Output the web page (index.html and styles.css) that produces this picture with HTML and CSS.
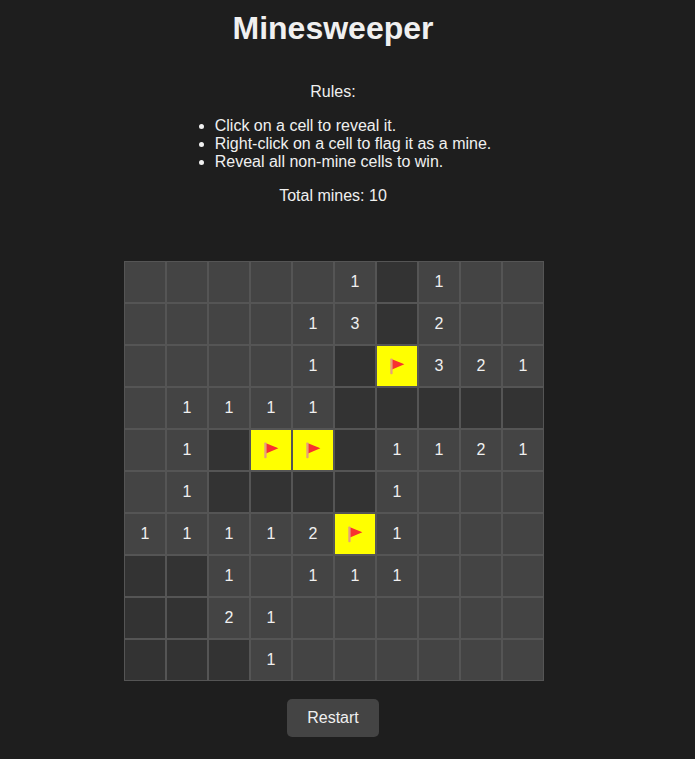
FILE: index.html
```html
<!DOCTYPE html>
<html lang="en">
<head>
<meta charset="utf-8">
<title>Minesweeper</title>
<link rel="stylesheet" href="styles.css">
</head>
<body>
<main class="game">
  <h1 class="title">Minesweeper</h1>
  <section class="rules">
    <p>Rules:</p>
    <ul>
      <li>Click on a cell to reveal it.</li>
      <li>Right-click on a cell to flag it as a mine.</li>
      <li>Reveal all non-mine cells to win.</li>
    </ul>
    <p>Total mines: 10</p>
  </section>
  <div class="board" id="board"></div>
  <button class="restart" type="button">Restart</button>
</main>
<script src="game.js"></script>
</body>
</html>
```
FILE: styles.css
```css
body {
  margin: 0;
  background: #1e1e1e;
  color: #f0f0f0;
  font: 16px/18px Arial, "Liberation Sans", sans-serif;
}
.game {
  display: flex;
  flex-direction: column;
  align-items: center;
  width: 666px;
  padding-top: 10px;
}
.title {
  margin: 0 0 37px;
  font-size: 32px;
  line-height: 36px;
}
.rules {
  display: flex;
  flex-direction: column;
  align-items: center;
  margin-bottom: 56px;
}
.rules p {
  margin: 0;
}
.rules ul {
  margin: 16px 0;
  padding-left: 40px;
}
.board {
  display: grid;
  grid-template-columns: repeat(10, 42px);
  grid-auto-rows: 42px;
  margin-left: 2px;
}
.cell {
  box-sizing: border-box;
  display: flex;
  align-items: center;
  justify-content: center;
  border: 1px solid #555;
  background: #333;
}
.revealed {
  background: #444;
}
.flagged {
  background: #ff0;
}
.flag {
  width: 40px;
  height: 40px;
}
.restart {
  min-width: 92px;
  margin: 18px 0 0;
  padding: 10px 20px;
  border: 0;
  border-radius: 5px;
  background: #444;
  color: #f0f0f0;
  font: inherit;
}
```
FILE: game.js
```js
// "." revealed and empty, "#" hidden, "F" flagged, digits are mine counts
const rows = [
  ".....1#1..",
  "....13#2..",
  "....1#F321",
  ".1111#####",
  ".1#FF#1121",
  ".1####1...",
  "11112F1...",
  "##1.111...",
  "##21......",
  "###1......"
];
const flag = '<svg class="flag" viewBox="0 0 40 40">' +
  '<path d="M15 13.2L27.4 18.3L15 23.5Z" fill="#f8312f"/>' +
  '<rect x="13.3" y="12.4" width="2.3" height="15.8" rx="0.8" fill="#e5a07c"/></svg>';
const board = document.getElementById("board");
for (const ch of rows.join("")) {
  const cell = document.createElement("div");
  cell.className = "cell";
  if (ch === "F") {
    cell.classList.add("flagged");
    cell.innerHTML = flag;
  } else if (ch !== "#") {
    cell.classList.add("revealed");
    if (ch !== ".") cell.textContent = ch;
  }
  board.append(cell);
}
```
